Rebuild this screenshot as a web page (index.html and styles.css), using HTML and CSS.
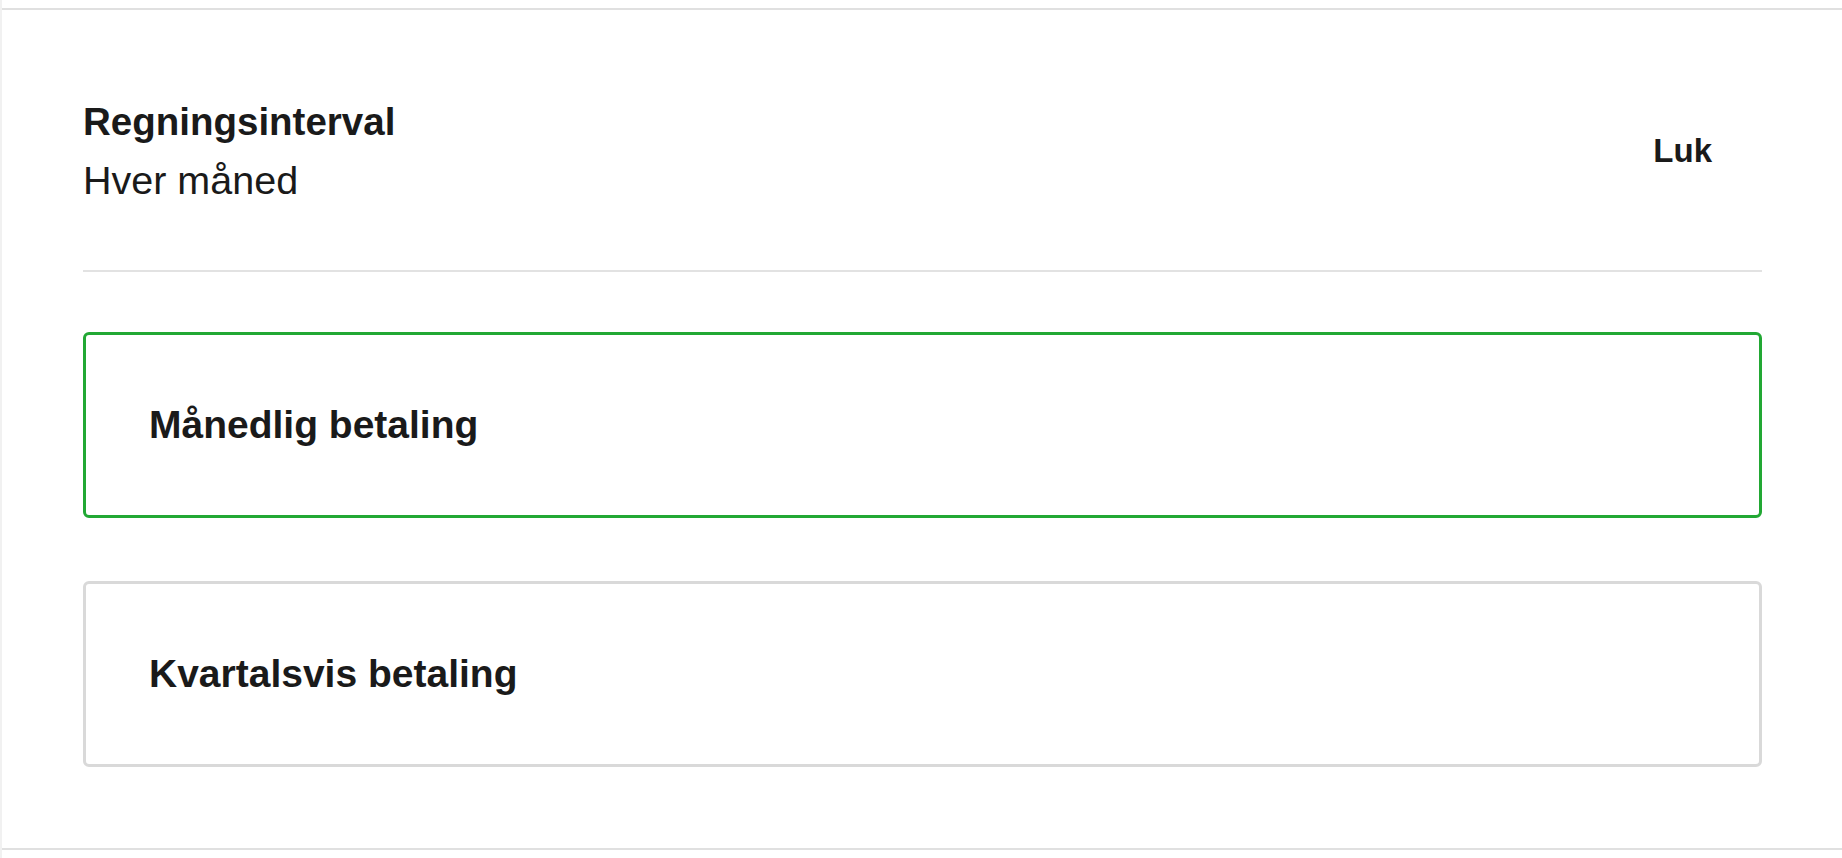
FILE: index.html
```html
<!DOCTYPE html>
<html lang="da">
<head>
<meta charset="utf-8">
<title>Regningsinterval</title>
<link rel="stylesheet" href="styles.css">
</head>
<body>
<div class="page">
  <section class="panel">
    <header class="panel-header">
      <div class="summary">
        <div class="summary-title">Regningsinterval</div>
        <div class="summary-value">Hver måned</div>
      </div>
      <button class="close-btn" type="button">Luk</button>
    </header>
    <div class="options">
      <div class="option option-selected">Månedlig betaling</div>
      <div class="option">Kvartalsvis betaling</div>
    </div>
  </section>
</div>
</body>
</html>
```
FILE: styles.css
```css
html, body {
  margin: 0;
  padding: 0;
  background: #ffffff;
}
body {
  font-family: "Liberation Sans", Arial, sans-serif;
  color: #1a1a1a;
}
.page {
  border-left: 2px solid #f1f1f1;
  min-height: 858px;
  box-sizing: border-box;
  padding-top: 8px;
}
.panel {
  border-top: 2px solid #e0e0e0;
  border-bottom: 2px solid #e0e0e0;
  padding: 83px 80px 81px 81px;
}
.panel-header {
  display: flex;
  align-items: center;
  justify-content: space-between;
  padding-bottom: 61px;
  border-bottom: 2px solid #e2e2e2;
}
.summary-title {
  font-size: 38.5px;
  line-height: 58px;
  font-weight: 700;
}
.summary-value {
  font-size: 39.5px;
  line-height: 58px;
  font-weight: 400;
}
.close-btn {
  font-family: inherit;
  font-size: 33px;
  font-weight: 700;
  color: #1a1a1a;
  background: none;
  border: none;
  padding: 10px 50px 10px 20px;
  cursor: pointer;
}
.options {
  display: flex;
  flex-direction: column;
  gap: 63px;
  padding-top: 60px;
}
.option {
  box-sizing: border-box;
  height: 186px;
  display: flex;
  align-items: center;
  padding-left: 63px;
  border: 3px solid #d9d9d9;
  border-radius: 6px;
  font-size: 39px;
  font-weight: 700;
}
.option-selected {
  border-color: #22a834;
}
```
